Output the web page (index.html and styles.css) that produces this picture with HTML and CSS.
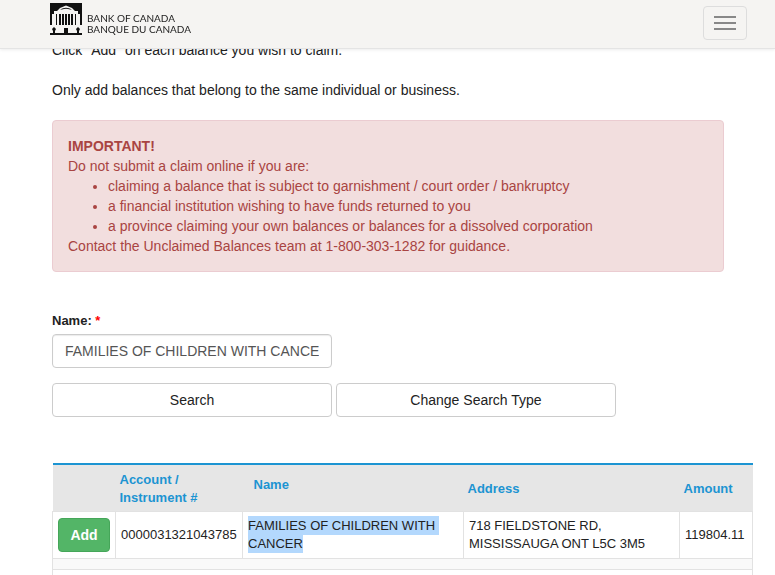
FILE: index.html
```html
<!DOCTYPE html>
<html lang="en">
<head>
<meta charset="utf-8">
<meta name="viewport" content="width=device-width, initial-scale=1">
<title>Unclaimed Balances - Bank of Canada</title>
<link rel="stylesheet" href="styles.css">
</head>
<body>
<header class="site-header">
  <a class="brand" href="#">
    <svg class="brand-mark" viewBox="0 0 32 32" aria-hidden="true">
      <path fill="#111" d="M0 0H32V22H30V11H28V8H25L22 5L16 2.500L10 5L7 8H4V11H2V22H0Z"/>
      <path fill="#111" d="M10 6.500Q16 3 22 6.500H20Q16 5 12 6.500Z"/>
      <path fill="#111" d="M6 11H7V22H6ZM9 11H11V22H9ZM12 11H14V22H12ZM15 11H17V22H15ZM18 11H20V22H18ZM21 11H23V22H21ZM25 11H26V22H25Z"/>
      <path fill="#111" d="M0 32V30H3V28L2 26L4 24L6 26L5 28V30H14V25H18V30H27V28L26 26L28 24L30 26L29 28V30H32V32Z"/>
    </svg>
    <span class="brand-name"><span>BANK OF CANADA</span><span>BANQUE DU CANADA</span></span>
  </a>
  <button class="menu-toggle" type="button" aria-label="Menu">
    <span class="bar"></span><span class="bar"></span><span class="bar"></span>
  </button>
</header>
<main class="content">
  <p>Click "Add" on each balance you wish to claim.</p>
  <p>Only add balances that belong to the same individual or business.</p>
  <section class="alert">
    <strong>IMPORTANT!</strong>
    <p>Do not submit a claim online if you are:</p>
    <ul>
      <li>claiming a balance that is subject to garnishment / court order / bankruptcy</li>
      <li>a financial institution wishing to have funds returned to you</li>
      <li>a province claiming your own balances or balances for a dissolved corporation</li>
    </ul>
    <p>Contact the Unclaimed Balances team at 1-800-303-1282 for guidance.</p>
  </section>
  <form class="search">
    <label for="name">Name: <span class="required">*</span></label>
    <input id="name" type="text" value="FAMILIES OF CHILDREN WITH CANCER">
    <div class="actions">
      <button type="button">Search</button>
      <button type="button">Change Search Type</button>
    </div>
  </form>
  <table class="results">
    <colgroup>
      <col class="col-action"><col class="col-account"><col class="col-name"><col class="col-address"><col class="col-amount">
    </colgroup>
    <thead>
      <tr>
        <th></th>
        <th>Account / Instrument #</th>
        <th class="name-head">Name</th>
        <th>Address</th>
        <th>Amount</th>
      </tr>
    </thead>
    <tbody>
      <tr>
        <td><button class="add" type="button">Add</button></td>
        <td>0000031321043785</td>
        <td><mark>FAMILIES OF CHILDREN WITH&nbsp;<br>CANCER</mark></td>
        <td>718 FIELDSTONE RD, MISSISSAUGA ONT L5C 3M5</td>
        <td>119804.11</td>
      </tr>
      <tr class="spacer"><td colspan="5"></td></tr>
      <tr class="footer-row"><td colspan="5"></td></tr>
    </tbody>
  </table>
</main>
</body>
</html>
```
FILE: styles.css
```css
* {
  box-sizing: border-box;
}

html {
  overflow: hidden;
}

body {
  margin: 0;
  background: #fff;
  color: #222;
  font: 14px/20px "Liberation Sans", Arial, sans-serif;
}

p,
ul {
  margin: 0;
}

button,
input {
  font: inherit;
}

.site-header {
  position: fixed;
  inset: 0 0 auto;
  z-index: 1;
  display: flex;
  align-items: flex-start;
  justify-content: space-between;
  height: 49px;
  padding: 0 28px 0 50px;
  background: #f5f4f2;
  border-bottom: 1px solid #e4e4e4;
  box-shadow: 0 1px 3px rgba(0, 0, 0, 0.08);
}

.brand {
  display: flex;
  align-items: flex-end;
  gap: 5px;
  padding-top: 3px;
  color: #222;
  text-decoration: none;
}

.brand-mark {
  width: 32px;
  height: 32px;
}

.brand-name {
  display: grid;
  font: 10px/11px Lato, sans-serif;
}

.menu-toggle {
  display: flex;
  flex-direction: column;
  align-items: center;
  justify-content: center;
  gap: 4px;
  width: 44px;
  height: 34px;
  margin-top: 6px;
  padding: 0;
  background: transparent;
  border: 1px solid #ddd;
  border-radius: 4px;
}

.bar {
  width: 22px;
  height: 2px;
  background: #888;
}

.content {
  padding: 40px 51px 0 52px;
}

.content > p {
  margin-bottom: 20px;
}

.alert {
  padding: 15px;
  background: #f2dede;
  border: 1px solid #ebccd1;
  border-radius: 4px;
  color: #a94442;
}

.alert strong {
  display: block;
}

.alert ul {
  padding-left: 40px;
}

.search {
  margin-top: 39px;
}

.search label {
  display: block;
  margin-bottom: 3px;
  font-size: 13px;
  font-weight: bold;
}

.required {
  color: #f00;
}

.search input {
  display: block;
  width: 280px;
  height: 34px;
  padding: 6px 12px;
  border: 1px solid #ccc;
  border-radius: 4px;
  box-shadow: inset 0 1px 1px rgba(0, 0, 0, 0.08);
  color: #555;
}

.actions {
  display: flex;
  gap: 4px;
  margin-top: 15px;
}

.actions button {
  width: 280px;
  height: 34px;
  background: #fff;
  border: 1px solid #ccc;
  border-radius: 4px;
  color: #222;
}

.results {
  width: 701px;
  margin-top: 46px;
  border-collapse: collapse;
  table-layout: fixed;
  font-size: 13px;
  line-height: 18px;
}

.col-action {
  width: 63px;
}

.col-account {
  width: 127px;
}

.col-name {
  width: 221px;
}

.col-address {
  width: 216px;
}

.results thead {
  background: #e6e6e6;
  border-top: 2px solid #1c94d2;
}

.results th {
  height: 47px;
  padding: 6px 4px 4px;
  color: #1c94d2;
  text-align: left;
}

.results .name-head {
  padding: 0 11px 6px;
}

.results td {
  height: 47px;
  padding: 5px;
  border: 1px solid #e2e2e2;
}

.results mark {
  padding: 2px 0;
  background: #b3d8fd;
  color: inherit;
}

.add {
  display: block;
  width: 52px;
  height: 34px;
  padding: 0;
  background: #53b567;
  border: 1px solid #45a659;
  border-radius: 4px;
  color: #fff;
  font-size: 14px;
  font-weight: bold;
}

.results .spacer td {
  height: 11px;
  padding: 0;
  background: #f9f9f9;
}

.results .footer-row td {
  height: 20px;
}
```
